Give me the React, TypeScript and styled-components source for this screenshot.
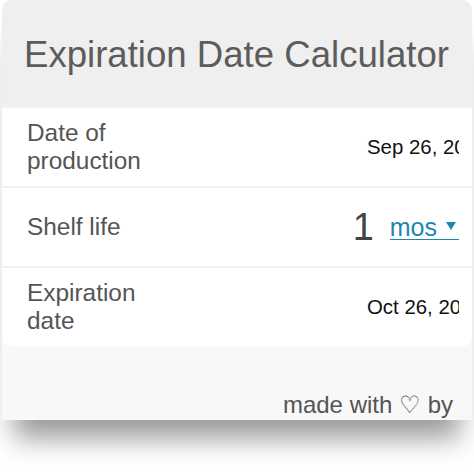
import React from 'react';
import styled, { createGlobalStyle } from 'styled-components';

const GlobalStyle = createGlobalStyle`
  html, body {
    margin: 0;
    padding: 0;
    background: #ffffff;
  }
  body {
    font-family: 'Liberation Sans', Arial, sans-serif;
  }
`;

const Page = styled.div`
  width: 474px;
  height: 474px;
  overflow: hidden;
  padding: 0 2px;
  box-sizing: border-box;
`;

const Card = styled.div`
  display: flex;
  flex-direction: column;
  background: #f8f8f8;
  border-radius: 10px 10px 0 0;
  box-shadow: 0 30px 26px -12px rgba(0, 0, 0, 0.4);
`;

const Header = styled.div`
  height: 106px;
  display: flex;
  align-items: center;
  padding: 4px 0 0 22px;
  box-sizing: border-box;
  background: #efefef;
  border-radius: 10px 10px 0 0;
  font-size: 36.6px;
  color: #5c5c5c;
`;

const Rows = styled.div`
  display: flex;
  flex-direction: column;
  gap: 2px;
  padding-top: 2px;
  background: #f1f1f1;
  border-radius: 0 0 8px 8px;
`;

const Row = styled.div<{ $last?: boolean }>`
  height: 78px;
  display: flex;
  align-items: center;
  justify-content: space-between;
  padding: 0 13px 0 25px;
  background: #ffffff;
  border-radius: ${({ $last }) => ($last ? '0 0 8px 8px' : '0')};
`;

const Label = styled.div`
  font-size: 24.4px;
  line-height: 28px;
  color: #555555;
  width: 150px;
`;

const Value = styled.div`
  width: 92px;
  overflow: hidden;
  white-space: nowrap;
  font-size: 20.4px;
  color: #111111;
`;

const Shelf = styled.div`
  display: flex;
  align-items: center;
  gap: 16px;
`;

const Amount = styled.span`
  font-size: 38px;
  color: #444444;
`;

const Unit = styled.span`
  display: flex;
  align-items: center;
  gap: 9px;
  padding-right: 3px;
  font-size: 25px;
  line-height: 24px;
  color: #1b87b5;
  border-bottom: 1.5px solid #1b87b5;
`;

const Caret = styled.svg`
  width: 10px;
  height: 8px;
  margin-top: -2px;
  fill: #1b87b5;
`;

const Footer = styled.div`
  height: 74px;
  display: flex;
  align-items: flex-end;
  justify-content: flex-end;
  padding: 0 19px 1px 0;
  box-sizing: border-box;
  font-size: 24px;
  color: #555555;
`;

export default function App() {
  return (
    <>
      <GlobalStyle />
      <Page>
        <Card>
          <Header>Expiration Date Calculator</Header>
          <Rows>
            <Row>
              <Label>Date of production</Label>
              <Value>Sep 26, 2024</Value>
            </Row>
            <Row>
              <Label>Shelf life</Label>
              <Shelf>
                <Amount>1</Amount>
                <Unit>
                  mos
                  <Caret viewBox="0 0 10 8">
                    <polygon points="0,0 10,0 5,8" />
                  </Caret>
                </Unit>
              </Shelf>
            </Row>
            <Row $last>
              <Label>Expiration date</Label>
              <Value>Oct 26, 2024</Value>
            </Row>
          </Rows>
          <Footer>made with ♡ by</Footer>
        </Card>
      </Page>
    </>
  );
}
